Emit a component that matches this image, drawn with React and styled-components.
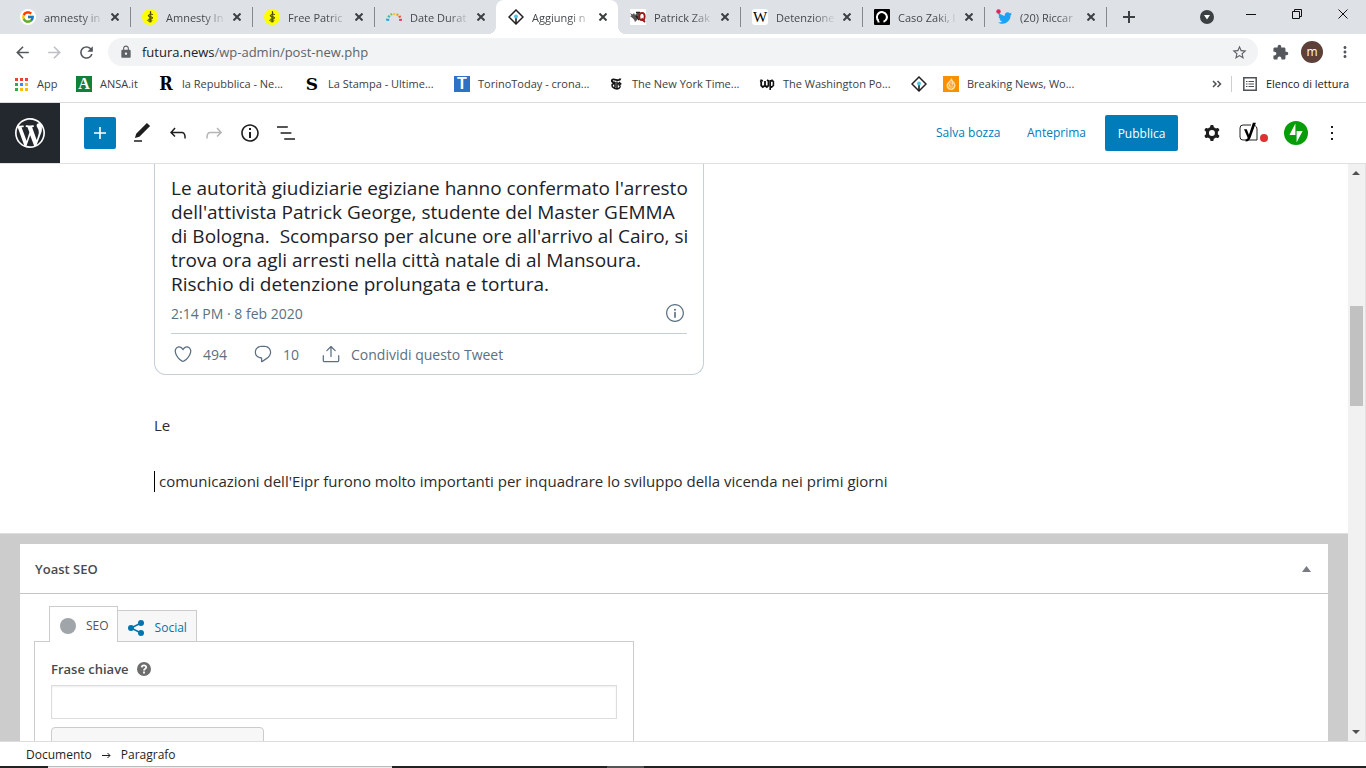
import React from "react";
import styled, { createGlobalStyle, css } from "styled-components";
import { FcGoogle } from "react-icons/fc";
import { FaTwitter } from "react-icons/fa";
import { MdArrowBack, MdArrowForward, MdRefresh, MdLock, MdStarBorder, MdExtension, MdMoreVert } from "react-icons/md";

const GlobalStyle = createGlobalStyle`
  *, *::before, *::after { box-sizing: border-box; }
  body { margin: 0; background: #fff; }
  body, button, input { font-family: "Open Sans", "Noto Sans", sans-serif; }
  button { border: 0; padding: 0; background: none; color: inherit; cursor: pointer; }
  a { color: inherit; text-decoration: none; }
  svg { display: block; flex: none; }
`;

const Page = styled.div`
  display: flex;
  flex-direction: column;
  height: 100vh;
  overflow: hidden;
  color: #3c4043;
`;

/* ---------- browser: tab strip ---------- */

const TabStrip = styled.div`
  display: flex;
  flex: none;
  height: 34px;
  padding-left: 8px;
  background: #dee1e6;
`;

const Tab = styled.div`
  position: relative;
  display: flex;
  align-items: center;
  flex: 0 1 122px;
  min-width: 0;
  padding: 0 10px 0 12px;
  font-size: 11px;
  color: #45494d;
  background: ${(p) => (p.$active ? "#fff" : "transparent")};
  border-radius: 8px 8px 0 0;
  ${(p) =>
    p.$divided &&
    css`
      &::after {
        content: "";
        position: absolute;
        right: -1px;
        top: 7px;
        width: 1px;
        height: 20px;
        background: #85898d;
      }
    `}
  ${(p) =>
    p.$active &&
    css`
      &::before, &::after {
        content: "";
        position: absolute;
        bottom: 0;
        width: 8px;
        height: 8px;
      }
      &::before { left: -8px; background: radial-gradient(circle at 0 0, transparent 8px, #fff 8px); }
      &::after { right: -8px; background: radial-gradient(circle at 100% 0, transparent 8px, #fff 8px); }
    `}
`;

const TabTitle = styled.span`
  flex: 1;
  min-width: 0;
  margin: 0 6px 0 8px;
  white-space: nowrap;
  mask-image: linear-gradient(to right, #000 calc(100% - 22px), transparent);
`;

const CloseButton = styled.button`
  display: flex;
  justify-content: center;
  width: 10px;
  color: #3c4043;
`;

const NewTab = styled.button`
  display: flex;
  align-items: center;
  justify-content: center;
  width: 28px;
  margin-left: 9px;
  color: #3c4043;
`;

const WindowControls = styled.div`
  display: flex;
  margin-left: auto;
`;

const WindowButton = styled.button`
  display: flex;
  justify-content: center;
  width: ${(p) => (p.$search ? 42 : 46)}px;
  padding-top: ${(p) => (p.$search ? 10 : 9)}px;
  color: #111;
`;

/* ---------- browser: address bar ---------- */

const AddressBar = styled.div`
  display: flex;
  align-items: center;
  flex: none;
  height: 36px;
  padding: 0 11px 0 12px;
  color: #5f6368;
`;

const NavButton = styled.button`
  display: flex;
  align-items: center;
  justify-content: center;
  width: 20px;
  height: 28px;
  margin-left: ${(p) => p.$space || 0}px;
  color: ${(p) => (p.disabled ? "#bdc0c4" : "#54585d")};
`;

const Omnibox = styled.div`
  display: flex;
  align-items: center;
  flex: 1;
  height: 28px;
  margin-left: 12px;
  padding: 0 10px 0 11px;
  border-radius: 14px;
  background: #f1f3f4;
`;

const Url = styled.span`
  flex: 1;
  margin-left: 9px;
  font-size: 13px;
  b { font-weight: 400; color: #202124; }
`;

const Avatar = styled.button`
  width: 22px;
  height: 22px;
  margin-left: 11px;
  border-radius: 50%;
  background: #5d4037;
  color: #fff;
  font-size: 12px;
  line-height: 20px;
`;

/* ---------- browser: bookmarks ---------- */

const BookmarkBar = styled.nav`
  display: flex;
  align-items: center;
  flex: none;
  height: 33px;
  padding: 0 17px 4px 14px;
  border-bottom: 1px solid #dadce0;
  font-size: 11px;
  line-height: 16px;
`;

const Bookmark = styled.a`
  display: flex;
  align-items: center;
  gap: 8px;
  flex: 0 1 ${(p) => p.$width}px;
  white-space: nowrap;
`;

const BookmarkEnd = styled.div`
  display: flex;
  align-items: center;
  margin-left: auto;
  color: #202124;
`;

const ReadingList = styled.button`
  display: flex;
  align-items: center;
  gap: 9px;
  margin-left: 9px;
  padding-left: 11px;
  border-left: 1px solid #ccced1;
  font-size: 11px;
  line-height: 16px;
  color: #202124;
`;

/* ---------- editor header ---------- */

const EditorHeader = styled.header`
  display: flex;
  align-items: center;
  flex: none;
  height: 61px;
  padding-right: 22px;
  border-bottom: 1px solid #e0e0e0;
  color: #1e1e1e;
`;

const SiteLink = styled.a`
  display: flex;
  align-items: center;
  justify-content: center;
  width: 60px;
  height: 60px;
  margin-right: 24px;
  background: #23282e;
  color: #fff;
`;

const Inserter = styled.button`
  display: flex;
  align-items: center;
  justify-content: center;
  width: 32px;
  height: 32px;
  margin-right: 8px;
  border-radius: 2px;
  background: #007cba;
  color: #fff;
`;

const ToolButton = styled.button`
  display: flex;
  align-items: center;
  justify-content: center;
  width: ${(p) => (p.$narrow ? 24 : 36)}px;
  height: 36px;
  color: ${(p) => (p.disabled ? "#b5b5b5" : "#1e1e1e")};
`;

const HeaderActions = styled.div`
  display: flex;
  align-items: center;
  gap: 6px;
  margin-left: auto;
`;

const TextButton = styled.button`
  min-width: ${(p) => p.$width}px;
  margin-left: 18px;
  font-size: 12px;
  line-height: 16px;
  text-align: left;
  color: #007cba;
`;

const PublishButton = styled.button`
  height: 36px;
  min-width: 73px;
  margin: 0 10px 0 12px;
  padding: 0 12px;
  border-radius: 2px;
  background: #007cba;
  font-size: 12px;
  color: #fff;
`;

/* ---------- editor canvas ---------- */

const Workspace = styled.div`
  display: flex;
  flex: 1;
  min-height: 0;
`;

const Canvas = styled.main`
  flex: 1;
  min-width: 0;
  overflow: hidden;
  background: #ccc;
`;

const Document = styled.section`
  padding-bottom: 38px;
  background: #fff;
  border-bottom: 1px solid #ddd;
`;

const Column = styled.div`
  max-width: 1040px;
  margin: 0 auto;
`;

const TweetCard = styled.article`
  max-width: 550px;
  margin-bottom: 36px;
  padding: 12px 16px 0;
  border: 1px solid #c4cfd6;
  border-top: 0;
  border-radius: 0 0 12px 12px;
  color: #5b7083;
  font-size: 14px;
`;

const TweetText = styled.p`
  margin: 0;
  font-size: 19px;
  line-height: 24px;
  color: #1c2228;
  white-space: pre;
`;

const TweetMeta = styled.div`
  display: flex;
  align-items: center;
  justify-content: space-between;
  height: 38px;
  padding: 0 2px 3px 0;
  border-bottom: 1px solid #c4cfd6;
`;

const TweetActions = styled.div`
  display: flex;
  align-items: center;
  height: 40px;
  padding-left: 2px;
`;

const TweetAction = styled.button`
  display: flex;
  align-items: center;
  gap: 10px;
  min-width: ${(p) => p.$width || 0}px;
  font-size: 14px;
`;

const Paragraph = styled.p`
  margin: 0 0 28px;
  font-size: 15px;
  line-height: 28px;
  color: #2b2b2b;
  &:last-child { margin-bottom: 0; }
`;

const Caret = styled.span`
  display: inline-block;
  width: 1px;
  height: 21px;
  margin-right: 4px;
  background: #000;
  vertical-align: -5px;
`;

/* ---------- Yoast box ---------- */

const MetaBox = styled.section`
  margin: 10px 20px 0;
  background: #fff;
`;

const MetaHeader = styled.header`
  display: flex;
  align-items: center;
  justify-content: space-between;
  height: 50px;
  padding: 0 17px 0 15px;
  border-bottom: 1px solid #c3c4c9;
`;

const MetaTitle = styled.h2`
  margin: 0;
  font-size: 13px;
  font-weight: 600;
  color: #464b50;
`;

const MetaBody = styled.div`
  padding: 12px 14px 0;
`;

const TabList = styled.div`
  display: flex;
  align-items: flex-end;
  padding-left: 15px;
`;

const SeoTab = styled.button`
  display: flex;
  align-items: center;
  gap: 10px;
  border: 1px solid #ccc;
  border-bottom: 0;
  font-size: 12px;
  ${(p) =>
    p.$active
      ? css`
          z-index: 1;
          height: 36px;
          margin-bottom: -1px;
          padding: 2px 8px 0 10px;
          color: #555;
          background: #fff;
        `
      : css`
          height: 31px;
          padding: 3px 9px 0;
          border-left-width: 0;
          color: #0075ae;
          background: #f7f7f7;
        `}
`;

const ScoreDot = styled.span`
  width: 16px;
  height: 16px;
  border-radius: 50%;
  background: #a0a5aa;
`;

const TabPanel = styled.div`
  max-width: 600px;
  height: 180px;
  padding: 16px;
  border: 1px solid #ccc;
`;

const FieldHead = styled.div`
  display: flex;
  align-items: center;
  gap: 7px;
  height: 22px;
  margin-bottom: 5px;
  label { font-size: 13px; font-weight: 600; color: #464b50; }
`;

const KeyphraseInput = styled.input`
  display: block;
  width: 100%;
  height: 34px;
  padding: 0 8px;
  border: 1px solid #ddd;
  background: #fff;
  box-shadow: inset 0 1px 2px rgba(0, 0, 0, 0.07);
`;

const RelatedButton = styled.button`
  display: block;
  width: 213px;
  height: 34px;
  margin-top: 8px;
  border: 1px solid #ccc;
  border-radius: 4px;
  background: #f7f7f7;
`;

/* ---------- scroll bar ---------- */

const ScrollTrack = styled.div`
  display: flex;
  flex-direction: column;
  justify-content: space-between;
  align-items: center;
  flex: none;
  width: 18px;
  padding: 7px 1px 7px 0;
  border-right: 1px solid #e2e2e2;
  background: #f1f1f1;
`;

const ScrollRun = styled.div`
  flex: 1;
  display: flex;
  flex-direction: column;
  align-self: stretch;
  padding: 0 1px 0 2px;
  &::before { content: ""; flex: 130 1 0; }
  &::after { content: ""; flex: 322 1 0; }
`;

const ScrollThumb = styled.div`
  flex: 99 1 0;
  background: #c1c1c1;
`;

/* ---------- footer ---------- */

const Footer = styled.nav`
  display: flex;
  align-items: center;
  gap: 10px;
  flex: none;
  height: 25px;
  padding: 2px 0 0 26px;
  border-top: 1px solid #ddd;
  color: #1e1e1e;
  button { font-size: 12px; line-height: 16px; }
`;

const TaskBar = styled.div`
  display: flex;
  flex: none;
  height: 2px;
  background: #222;
`;

const SearchStrip = styled.div`
  width: 344px;
  margin-left: 48px;
  background: #ececec;
  border-top: 1px solid #bbb;
`;

const RunningApp = styled.div`
  width: 37px;
  margin-left: 215px;
  background: #555;
`;

/* ---------- drawings ---------- */

const Icon = ({ d, size = 24, box = "0 0 24 24" }) => (
  <svg width={size} height={size} viewBox={box} fill="currentColor" fillRule="evenodd" aria-hidden="true">
    <path d={d} />
  </svg>
);

const Svg16 = ({ children }) => (
  <svg width="16" height="16" viewBox="0 0 16 16" aria-hidden="true">{children}</svg>
);

const Glyph = styled.span`
  flex: none;
  width: 16px;
  height: 16px;
  border-radius: ${(p) => p.$round || 0}px;
  background: ${(p) => p.$bg || "transparent"};
  color: ${(p) => p.$color || "#000"};
  font-family: ${(p) => p.$font || '"Liberation Serif", serif'};
  font-size: ${(p) => p.$size || 16}px;
  font-weight: ${(p) => p.$weight || 700};
  line-height: 16px;
  text-align: center;
`;

const GoogleDisc = styled.span`
  display: flex;
  align-items: center;
  justify-content: center;
  flex: none;
  width: 16px;
  height: 16px;
  border-radius: 50%;
  background: #fff;
`;

const Google = () => <GoogleDisc><FcGoogle size={14} /></GoogleDisc>;

const Amnesty = () => (
  <Svg16>
    <circle cx="8" cy="8" r="8" fill="#ff0" />
    <path d="M8.500 2.200v2.600" stroke="#3a3a00" strokeWidth="1.300" />
    <path d="M7.300 5.200h2v8.300h-2z" fill="#77770a" />
    <path d="M10.800 5.500C9 4.600 5.800 5.600 6.200 7s4.800.4 4.600 2-4.900.6-5.100 2 3.300 1.600 4.600.5" fill="none" stroke="#3a3a00" strokeWidth="1" />
  </Svg16>
);

const DateRays = () => (
  <Svg16>
    <g strokeWidth="2">
      <path d="M0 10.500l3.200.6" stroke="#29a3dd" />
      <path d="M1.800 6.800l2.200 1.400" stroke="#46b9c8" />
      <path d="M4.800 4.400l1 2" stroke="#8cc63f" />
      <path d="M8.300 4v2.200" stroke="#f4c430" />
      <path d="M12 4.800l-1.100 1.900" stroke="#f59a23" />
      <path d="M14.800 7.200l-2.100 1.200" stroke="#ee5a3a" />
      <path d="M16 10.800l-2.800.3" stroke="#e8336d" />
    </g>
  </Svg16>
);

const Diamond = () => (
  <Svg16>
    <path d="M8 1l7 7-7 7-7-7z" fill="#fff" stroke="#222" strokeWidth="1.500" />
    <path d="M8 8v6.500" stroke="#111" strokeWidth="1.500" />
    <circle cx="8" cy="7.500" r="2" fill="#4fc3e8" />
  </Svg16>
);

const MagazineQ = () => (
  <Svg16>
    <rect width="16" height="16" fill="#fff" />
    <path d="M0 4l2.500 1.500L4 4l1 2 2-2v7l-2 2-1-2.500L2.500 9 0 7l1.500-.5z" fill="#555" />
    <path d="M6 3.500h4M8 3.500v7M6 7l3 4" stroke="#222" strokeWidth="1.500" />
    <ellipse cx="12" cy="7.500" rx="2.700" ry="3.600" fill="none" stroke="#9c1616" strokeWidth="1.800" />
    <path d="M11.500 9.500l3.500 3.500" stroke="#9c1616" strokeWidth="1.800" />
  </Svg16>
);

const BlackRing = () => (
  <Svg16>
    <rect width="16" height="16" rx="1" fill="#000" />
    <path d="M4.600 11.800A5 5 0 1 1 9.500 12.800" fill="none" stroke="#fff" strokeWidth="2" />
    <path d="M3.800 10.500l2.200 2.700-2.500.3z" fill="#fff" />
  </Svg16>
);

const TwitterBadge = () => (
  <Svg16>
    <g transform="translate(2 2)"><FaTwitter size={14} color="#1da1f2" /></g>
    <circle cx="2.500" cy="2.500" r="2.200" fill="#e0245e" />
  </Svg16>
);

const AppsGrid = () => (
  <svg width="15" height="15" viewBox="0 0 15 15" aria-hidden="true">
    {["#ea4335", "#ea4335", "#ea4335", "#34a853", "#4285f4", "#fbbc04", "#34a853", "#fbbc04", "#fbbc04"].map((c, i) => (
      <rect key={i} x={1 + (i % 3) * 5} y={1 + Math.floor(i / 3) * 5} width="3" height="3" fill={c} />
    ))}
  </svg>
);

const Times = () => (
  <Svg16>
    <path d="M12.500 2.500c-.5 2-2.500 1.800-4.500 1.300S4 3 3.800 4.600 5.500 6.600 7 6" fill="none" stroke="#111" strokeWidth="1.800" />
    <path d="M4.200 8.200c-1 4 6 6.800 8 2.600M4 8.500l3-1.500v4.500M9 5.500v7" fill="none" stroke="#111" strokeWidth="1.500" />
    <path d="M9.500 8.500l2-2 1.300 1.300-1.600 1.200 1.500 1.600" fill="none" stroke="#111" strokeWidth="1.400" />
  </Svg16>
);

const Post = () => (
  <Svg16>
    <path d="M2.200 3.500v6L3.800 11 6 9.500V5M1 5.500L4 4.500M6 9.500L7.800 11 9.500 9.500V5L8 4" fill="none" stroke="#111" strokeWidth="1.800" />
    <path d="M11.200 4v10M11 5.500L13 4.300l1.400 1.400v3.800L12.800 11 11 10" fill="none" stroke="#111" strokeWidth="1.600" />
  </Svg16>
);

const Flame = () => (
  <Svg16>
    <rect width="16" height="16" fill="#fa9000" />
    <path d="M8.500 1.500c-.3 2 3.800 4.500 4 7.500.1 3-2 5-4.500 5s-4.500-1.800-4.500-4.600C3.500 6.500 8 4.500 8.500 1.500z" fill="#ffd9a0" />
    <path d="M8 5v8M5.500 8.500c0 1.500.5 3 1.500 3.500M10.500 7.500c.3 1.700-.2 3.500-1.300 4.500M6 7l4 3" fill="none" stroke="#fa9000" strokeWidth="0.800" />
  </Svg16>
);

const Cross = ({ size = 8, width = 2 }) => (
  <svg width={size} height={size} viewBox={`0 0 ${size} ${size}`} aria-hidden="true">
    <path d={`M.5.5L${size - 0.5} ${size - 0.5}M${size - 0.5}.5L.5 ${size - 0.5}`} stroke="currentColor" strokeWidth={width} />
  </svg>
);

const YoastMark = () => (
  <svg width="32" height="24" viewBox="0 0 32 24" aria-hidden="true">
    <path d="M13 4H5a3 3 0 0 0-3 3v9a3 3 0 0 0 3 3h14V8a4 4 0 0 0-2-3.500" fill="none" stroke="#222" strokeWidth="1" />
    <path d="M6 8.200h2.800l2.100 5.600 4-12h3L12.800 16c-1.100 3-2.300 4.400-5.200 4.600v-2.200c1.700-.3 2.300-1.200 1.800-2.500z" fill="#000" />
    <circle cx="26" cy="17" r="4" fill="#dc3232" />
  </svg>
);

const Jetpack = () => (
  <svg width="24" height="24" viewBox="0 0 32 32" aria-hidden="true">
    <circle cx="16" cy="16" r="16" fill="#069e08" />
    <path d="M15.200 18.700H7.200l8-15.500zM16.800 28.800V13.300h8z" fill="#fff" />
  </svg>
);

const ShareMark = () => (
  <svg width="18" height="18" viewBox="0 0 18 18" aria-hidden="true">
    <path d="M14 4L4 9l10 5" fill="none" stroke="#0075ae" strokeWidth="1.500" />
    <circle cx="4" cy="9" r="3" fill="#0075ae" />
    <circle cx="14" cy="4" r="3" fill="#0075ae" />
    <circle cx="14" cy="14" r="3" fill="#0075ae" />
  </svg>
);

const HelpMark = () => (
  <svg width="16" height="16" viewBox="0 0 16 16" aria-hidden="true">
    <circle cx="8" cy="8" r="7" fill="#6d6d6d" />
    <path d="M5.700 6.400C5.800 3.600 10.300 3.700 10.200 6.300 10.100 7.900 8 7.900 8 9.500M8 10.500v2" fill="none" stroke="#fff" strokeWidth="1.800" />
  </svg>
);

const ListMark = () => (
  <svg width="14" height="14" viewBox="0 0 14 14" aria-hidden="true">
    <path d="M.8.8h12.400v12.400H.8z" fill="none" stroke="#4d5156" strokeWidth="1.500" />
    <path d="M3 4.500h1.500M5.500 4.500H11M3 7h1.500M5.500 7H11M3 9.500h1.500M5.500 9.500H11" stroke="#4d5156" strokeWidth="1.200" />
  </svg>
);

const Triangle = ({ down, color = "#505050", width = 8 }) => (
  <svg width={width} height={width === 8 ? 4 : 6} viewBox="0 0 8 5" preserveAspectRatio="none" aria-hidden="true">
    <path d={down ? "M0 0h8L4 5z" : "M0 5h8L4 0z"} fill={color} />
  </svg>
);

const paths = {
  wordpress:
    "M20 10c0-5.510-4.490-10-10-10C4.480 0 0 4.490 0 10c0 5.520 4.480 10 10 10 5.510 0 10-4.480 10-10zM7.780 15.370L4.370 6.220c.55-.02 1.170-.08 1.170-.08.5-.06.44-1.130-.06-1.110 0 0-1.450.11-2.370.11-.18 0-.37 0-.58-.01C4.120 2.690 6.870 1.110 10 1.110c2.330 0 4.450.87 6.050 2.340-.68-.11-1.650.39-1.650 1.580 0 .74.45 1.360.9 2.100.35.61.55 1.360.55 2.460 0 1.490-1.400 5-1.400 5l-3.030-8.370c.54-.02.82-.17.82-.17.5-.05.44-1.250-.06-1.220 0 0-1.440.12-2.380.12-.87 0-2.330-.12-2.330-.12-.5-.03-.56 1.200-.06 1.220l.92.08 1.260 3.410zM17.410 10c.24-.64.74-1.870.43-4.250.7 1.290 1.050 2.710 1.050 4.250 0 3.290-1.730 6.240-4.400 7.780.97-2.590 1.940-5.200 2.920-7.780zM6.100 18.090C3.120 16.650 1.110 13.530 1.110 10c0-1.300.23-2.480.72-3.590C3.250 10.300 4.670 14.200 6.100 18.090zm4.030-6.630l2.580 6.980c-.86.29-1.760.45-2.710.45-.79 0-1.570-.11-2.290-.33.81-2.380 1.620-4.740 2.420-7.100z",
  plus: "M18 11.200h-5.200V6h-1.600v5.200H6v1.600h5.200V18h1.600v-5.200H18z",
  pencil: "M20.100 5.100L16.900 2 6.200 12.700l-1.300 4.400 4.500-1.300L20.100 5.100zM4 20.800h8v-1.500H4v1.500z",
  undo: "M18.300 11.700c-.6-.6-1.400-.9-2.300-.9H6.700l2.900-3.300-1.100-1-4.500 5L8.500 16l1-1-2.700-2.700H16c.5 0 .9.2 1.300.5 1 1 1 3.400 1 4.500v.3h1.500v-.2c0-1.500 0-4.300-1.500-5.700z",
  redo: "M15.600 6.500l-1.100 1 2.900 3.300H8c-.9 0-1.700.3-2.300.9-1.400 1.500-1.400 4.200-1.400 5.600v.2h1.500v-.3c0-1.100 0-3.500 1-4.500.3-.3.7-.5 1.300-.5h9.200L14.500 15l1.100 1.100 4.600-4.600-4.600-5z",
  info: "M12 3.200c-4.800 0-8.800 3.900-8.800 8.800 0 4.800 3.900 8.800 8.800 8.800 4.800 0 8.800-3.900 8.800-8.800 0-4.800-4-8.800-8.800-8.800zm0 16c-4 0-7.200-3.300-7.200-7.200C4.800 8 8 4.800 12 4.800s7.200 3.300 7.200 7.200c0 4-3.200 7.200-7.200 7.200zM11 17h2v-6h-2v6zm0-8h2V7h-2v2z",
  list: "M13.800 5.200H3v1.500h10.800V5.200zm-3.600 12v1.500H21v-1.500H10.200zm7.200-6H6.600v1.500h10.800v-1.500z",
  cog: "M10.289 4.836A1 1 0 0111.275 4h1.306a1 1 0 01.987.836l.244 1.466c.787.26 1.503.679 2.108 1.218l1.393-.522a1 1 0 011.216.437l.653 1.130a1 1 0 01-.23 1.273l-1.148.944a6.025 6.025 0 010 2.435l1.149.946a1 1 0 01.23 1.272l-.653 1.130a1 1 0 01-1.216.437l-1.394-.522c-.605.54-1.320.958-2.108 1.218l-.244 1.466a1 1 0 01-.987.836h-1.306a1 1 0 01-.986-.836l-.244-1.466a5.995 5.995 0 01-2.108-1.218l-1.394.522a1 1 0 01-1.217-.436l-.653-1.131a1 1 0 01.23-1.272l1.149-.946a6.026 6.026 0 010-2.435l-1.148-.944a1 1 0 01-.23-1.272l.653-1.131a1 1 0 011.217-.437l1.393.522a5.994 5.994 0 012.108-1.218l.244-1.466zM14.929 12a3 3 0 11-6 0 3 3 0 016 0z",
  more: "M13 19h-2v-2h2v2zm0-6h-2v-2h2v2zm0-6h-2V5h2v2z",
  heart: "M12 21.638h-.014C9.403 21.590 1.950 14.856 1.950 8.478c0-3.064 2.525-5.754 5.403-5.754 2.290 0 3.830 1.580 4.646 2.730.814-1.148 2.354-2.730 4.645-2.730 2.880 0 5.404 2.690 5.404 5.755 0 6.376-7.454 13.110-10.037 13.157H12zM7.354 4.225c-2.080 0-3.903 1.988-3.903 4.255 0 5.740 7.034 11.596 8.550 11.658 1.518-.062 8.550-5.917 8.550-11.658 0-2.267-1.823-4.255-3.903-4.255-2.528 0-3.940 2.936-3.952 2.965-.23.562-1.156.562-1.387 0-.014-.03-1.425-2.965-3.954-2.965z",
  reply: "M14.046 2.242l-4.148-.01h-.002c-4.374 0-7.800 3.427-7.800 7.802 0 4.098 3.186 7.206 7.465 7.370v3.828c0 .108.044.286.12.403.142.225.384.347.632.347.138 0 .277-.038.402-.118.264-.168 6.473-4.140 8.088-5.506 1.902-1.610 3.040-3.970 3.043-6.312v-.017c-.006-4.367-3.430-7.787-7.800-7.788zm3.787 12.972c-1.134.96-4.862 3.405-6.772 4.643V16.670c0-.414-.335-.75-.75-.75h-.396c-3.660 0-6.318-2.476-6.318-5.886 0-3.534 2.768-6.302 6.300-6.302l4.147.01h.002c3.532 0 6.300 2.766 6.302 6.296-.003 1.910-.942 3.844-2.514 5.176z",
  share: "M17.530 7.470l-5-5c-.293-.293-.768-.293-1.060 0l-5 5c-.294.293-.294.768 0 1.060s.767.294 1.060 0l3.720-3.720V15c0 .414.336.75.75.75s.75-.336.75-.75V4.810l3.720 3.720c.146.147.338.22.53.22s.384-.072.53-.22c.293-.293.293-.767 0-1.060zM19.708 21.944H4.292C3.028 21.944 2 20.916 2 19.652V14c0-.414.336-.75.75-.75s.75.336.75.75v5.652c0 .437.355.792.792.792h15.416c.437 0 .792-.355.792-.792V14c0-.414.336-.75.75-.75s.75.336.75.75v5.652c0 1.264-1.028 2.292-2.292 2.292z",
  tweetInfo: "M12 18.042c-.553 0-1-.447-1-1v-5.500c0-.553.447-1 1-1s1 .447 1 1v5.500c0 .553-.447 1-1 1zM12 6.800a1.250 1.250 0 1 1 0 2.500 1.250 1.250 0 0 1 0-2.500zM12 22.750C6.072 22.750 1.250 17.928 1.250 12S6.072 1.250 12 1.250 22.750 6.072 22.750 12 17.928 22.750 12 22.750zm0-20C6.900 2.750 2.750 6.900 2.750 12S6.900 21.250 12 21.250s9.250-4.150 9.250-9.250S17.100 2.750 12 2.750z",
};

const tabs = [
  { title: "amnesty in", icon: <Google /> },
  { title: "Amnesty In", icon: <Amnesty /> },
  { title: "Free Patric", icon: <Amnesty /> },
  { title: "Date Durat", icon: <DateRays /> },
  { title: "Aggiungi n", icon: <Diamond />, active: true },
  { title: "Patrick Zak", icon: <MagazineQ /> },
  { title: "Detenzione", icon: <Glyph $bg="#fff" $round={3} $size={15} $weight={400}>W</Glyph> },
  { title: "Caso Zaki, l", icon: <BlackRing /> },
  { title: "(20) Riccar", icon: <TwitterBadge /> },
];

const bookmarks = [
  { label: "App", width: 62, icon: <AppsGrid /> },
  { label: "ANSA.it", width: 82, icon: <Glyph $bg="#118038" $color="#fff">A</Glyph> },
  { label: "la Repubblica - Ne...", width: 146, icon: <Glyph $size={18} $font='"DejaVu Serif Condensed", "DejaVu Serif", serif'>R</Glyph> },
  { label: "La Stampa - Ultime...", width: 150, icon: <Glyph $size={17} $font='"DejaVu Serif", serif'>S</Glyph> },
  { label: "TorinoToday - crona...", width: 154, icon: <Glyph $bg="#2f72c4" $color="#fff" $font='"Liberation Sans", sans-serif'>T</Glyph> },
  { label: "The New York Time...", width: 151, icon: <Times /> },
  { label: "The Washington Po...", width: 152, icon: <Post /> },
  { label: "", name: "Futura", width: 32, icon: <Diamond /> },
  { label: "Breaking News, Wo...", width: 150, icon: <Flame /> },
];

export default function App() {
  return (
    <Page>
      <GlobalStyle />
      <TabStrip>
        {tabs.map((t, i) => (
          <Tab key={t.title} $active={t.active} $divided={!t.active && !tabs[i + 1]?.active}>
            {t.icon}
            <TabTitle>{t.title}</TabTitle>
            <CloseButton aria-label="Chiudi scheda"><Cross /></CloseButton>
          </Tab>
        ))}
        <NewTab aria-label="Nuova scheda">
          <svg width="12" height="12" viewBox="0 0 12 12"><path d="M6 0v12M0 6h12" stroke="currentColor" strokeWidth="2" /></svg>
        </NewTab>
        <WindowControls>
          <WindowButton aria-label="Cerca schede" $search>
            <svg width="14" height="14" viewBox="0 0 14 14"><circle cx="7" cy="7" r="7" fill="#3c4043" /><path d="M4 5h6l-3 4.500z" fill="#fff" /></svg>
          </WindowButton>
          <WindowButton aria-label="Riduci a icona">
            <svg width="10" height="10" viewBox="0 0 10 10"><path d="M0 5.500h10" stroke="currentColor" /></svg>
          </WindowButton>
          <WindowButton aria-label="Ripristina">
            <svg width="10" height="10" viewBox="0 0 10 10"><path d="M.5 2.500h7v7h-7zM2.500 2.500v-2h7v7h-2" fill="none" stroke="currentColor" /></svg>
          </WindowButton>
          <WindowButton aria-label="Chiudi"><Cross size={10} width={1} /></WindowButton>
        </WindowControls>
      </TabStrip>

      <AddressBar>
        <NavButton aria-label="Indietro"><MdArrowBack size={19} /></NavButton>
        <NavButton aria-label="Avanti" $space={12} disabled><MdArrowForward size={19} /></NavButton>
        <NavButton aria-label="Ricarica" $space={12}><MdRefresh size={19} /></NavButton>
        <Omnibox>
          <MdLock size={14} />
          <Url><b>futura.news</b>/wp-admin/post-new.php</Url>
          <MdStarBorder size={17} />
        </Omnibox>
        <NavButton aria-label="Estensioni" $space={12}><MdExtension size={17} /></NavButton>
        <Avatar aria-label="Profilo">m</Avatar>
        <NavButton aria-label="Menu" $space={12}><MdMoreVert size={18} /></NavButton>
      </AddressBar>

      <BookmarkBar>
        {bookmarks.map((b) => (
          <Bookmark key={b.label || b.name} href="#" $width={b.width} aria-label={b.name}>{b.icon}{b.label}</Bookmark>
        ))}
        <BookmarkEnd>
          <button aria-label="Altri preferiti">
            <svg width="10" height="8" viewBox="0 0 10 8"><path d="M1 1l3 3-3 3M5.500 1l3 3-3 3" fill="none" stroke="#4d5156" strokeWidth="1.500" /></svg>
          </button>
          <ReadingList><ListMark />Elenco di lettura</ReadingList>
        </BookmarkEnd>
      </BookmarkBar>

      <EditorHeader>
        <SiteLink href="#" aria-label="Visualizza articoli"><Icon d={paths.wordpress} size={36} box="-2 -2 24 24" /></SiteLink>
        <Inserter aria-label="Inserisci blocco"><Icon d={paths.plus} /></Inserter>
        <ToolButton aria-label="Strumenti"><Icon d={paths.pencil} /></ToolButton>
        <ToolButton aria-label="Annulla"><Icon d={paths.undo} /></ToolButton>
        <ToolButton aria-label="Ripeti" disabled><Icon d={paths.redo} /></ToolButton>
        <ToolButton aria-label="Dettagli"><Icon d={paths.info} /></ToolButton>
        <ToolButton aria-label="Vista elenco"><Icon d={paths.list} /></ToolButton>
        <HeaderActions>
          <TextButton $width={67}>Salva bozza</TextButton>
          <TextButton $width={60}>Anteprima</TextButton>
          <PublishButton>Pubblica</PublishButton>
          <ToolButton aria-label="Impostazioni"><Icon d={paths.cog} /></ToolButton>
          <ToolButton aria-label="Yoast SEO"><YoastMark /></ToolButton>
          <ToolButton aria-label="Jetpack"><Jetpack /></ToolButton>
          <ToolButton aria-label="Opzioni" $narrow><Icon d={paths.more} /></ToolButton>
        </HeaderActions>
      </EditorHeader>

      <Workspace>
        <Canvas>
          <Document>
            <Column>
              <TweetCard>
                <TweetText>
                  {"Le autorità giudiziarie egiziane hanno confermato l'arresto\ndell'attivista Patrick George, studente del Master GEMMA\ndi Bologna. \u00a0Scomparso per alcune ore all'arrivo al Cairo, si\ntrova ora agli arresti nella città natale di al Mansoura.\nRischio di detenzione prolungata e tortura."}
                </TweetText>
                <TweetMeta>
                  <a href="#">2:14 PM · 8 feb 2020</a>
                  <button aria-label="Informazioni"><Icon d={paths.tweetInfo} size={20} /></button>
                </TweetMeta>
                <TweetActions>
                  <TweetAction $width={80}><Icon d={paths.heart} size={20} />494</TweetAction>
                  <TweetAction $width={68}><Icon d={paths.reply} size={20} />10</TweetAction>
                  <TweetAction><Icon d={paths.share} size={20} />Condividi questo Tweet</TweetAction>
                </TweetActions>
              </TweetCard>
              <Paragraph>Le</Paragraph>
              <Paragraph><Caret />comunicazioni dell'Eipr furono molto importanti per inquadrare lo sviluppo della vicenda nei primi giorni</Paragraph>
            </Column>
          </Document>

          <MetaBox>
            <MetaHeader>
              <MetaTitle>Yoast SEO</MetaTitle>
              <button aria-label="Chiudi pannello"><Triangle color="#787c82" width={9} /></button>
            </MetaHeader>
            <MetaBody>
              <TabList role="tablist">
                <SeoTab role="tab" aria-selected="true" $active><ScoreDot />SEO</SeoTab>
                <SeoTab role="tab" aria-selected="false"><ShareMark />Social</SeoTab>
              </TabList>
              <TabPanel role="tabpanel">
                <FieldHead>
                  <label htmlFor="keyphrase">Frase chiave</label>
                  <button aria-label="Aiuto"><HelpMark /></button>
                </FieldHead>
                <KeyphraseInput id="keyphrase" type="text" />
                <RelatedButton aria-label="Frasi chiave correlate" />
              </TabPanel>
            </MetaBody>
          </MetaBox>
        </Canvas>
        <ScrollTrack>
          <Triangle />
          <ScrollRun><ScrollThumb /></ScrollRun>
          <Triangle down />
        </ScrollTrack>
      </Workspace>

      <Footer aria-label="Percorso blocco">
        <button>Documento</button>
        <svg width="9" height="7" viewBox="0 0 9 7" aria-hidden="true"><path d="M0 3.500h8M5.500 1L8 3.500 5.500 6" fill="none" stroke="currentColor" /></svg>
        <button>Paragrafo</button>
      </Footer>
      <TaskBar><SearchStrip /><RunningApp /></TaskBar>
    </Page>
  );
}
